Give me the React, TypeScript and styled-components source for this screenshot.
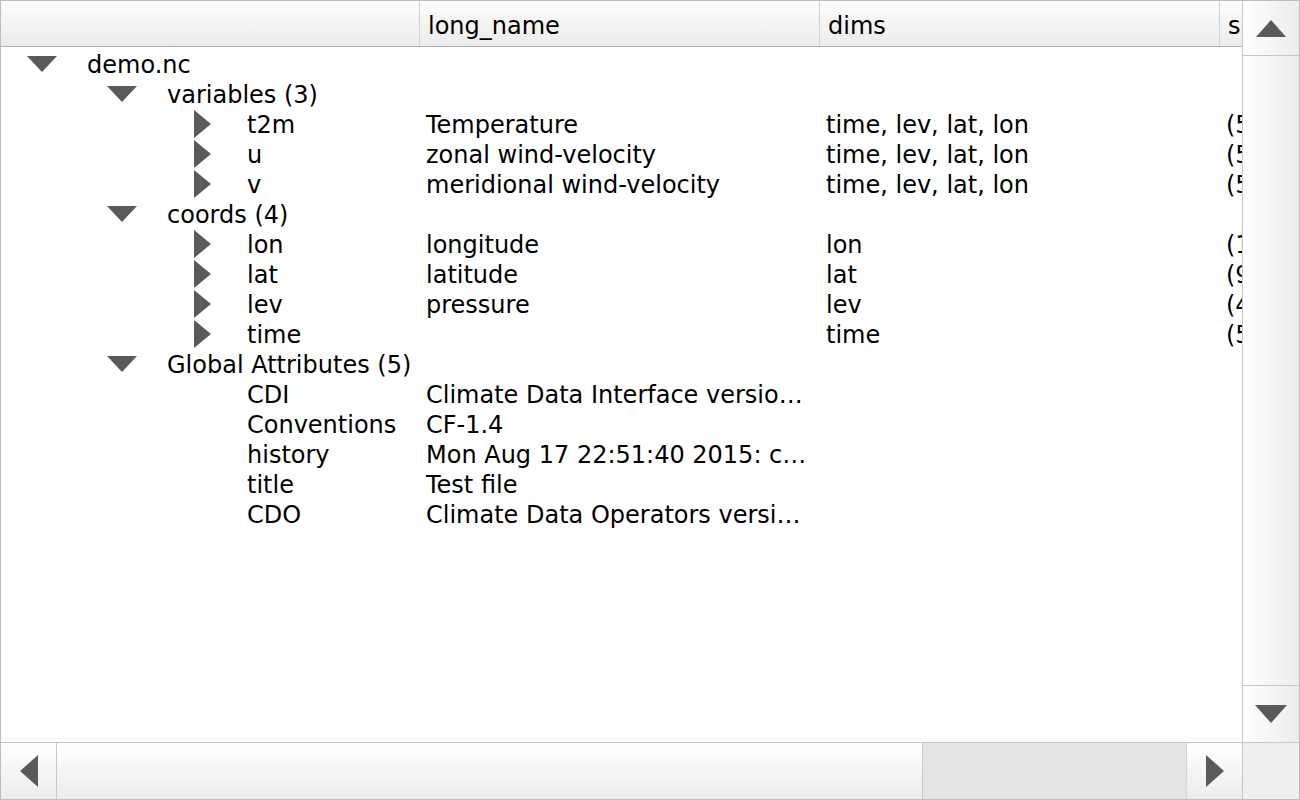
import React from "react";
import styled, { createGlobalStyle } from "styled-components";

const Global = createGlobalStyle`
  html, body { margin: 0; padding: 0; background: #ffffff; }
  body { font-family: "DejaVu Sans", "Liberation Sans", sans-serif; }
  * { box-sizing: border-box; }
`;

const Frame = styled.div`
  width: 1300px;
  height: 800px;
  border: 1px solid #bdbdbd;
  display: grid;
  grid-template-columns: 1fr 57px;
  grid-template-rows: 1fr 57px;
  background: #ffffff;
  overflow: hidden;
`;

const Viewport = styled.div`
  overflow: hidden;
  display: flex;
  flex-direction: column;
  min-width: 0;
`;

const Header = styled.div`
  height: 46px;
  flex: none;
  display: flex;
  border-bottom: 1px solid #b3b3b3;
  background: linear-gradient(to bottom, #fdfdfd, #ebebeb);
`;

const HeaderCell = styled.div<{ $w?: number }>`
  flex: ${(p) => (p.$w ? `0 0 ${p.$w}px` : "1 0 auto")};
  width: ${(p) => (p.$w ? `${p.$w}px` : "auto")};
  border-right: ${(p) => (p.$w ? "1px solid #d2d2d2" : "none")};
  padding-left: 8px;
  padding-top: 5px;
  display: flex;
  align-items: center;
  font-size: 24px;
  line-height: 28px;
  color: #000;
  white-space: nowrap;
  overflow: hidden;
`;

const Body = styled.div`
  padding-top: 3px;
  display: flex;
  flex-direction: column;
`;

const Row = styled.div`
  height: 30px;
  display: flex;
  align-items: center;
  font-size: 24px;
  line-height: 30px;
  color: #000;
  white-space: nowrap;
`;

const TreeCell = styled.div<{ $level: number }>`
  flex: 0 0 419px;
  display: flex;
  align-items: center;
  padding-left: ${(p) => p.$level * 80}px;
  overflow: hidden;
`;

const ToggleBox = styled.div`
  flex: 0 0 82px;
  height: 30px;
  display: flex;
  align-items: center;
  justify-content: center;
  margin-right: 4px;
`;

const Cell = styled.div<{ $w?: number }>`
  flex: ${(p) => (p.$w ? `0 0 ${p.$w}px` : "1 0 auto")};
  padding-left: 6px;
  overflow: hidden;
`;

const VScroll = styled.div`
  border-left: 1px solid #c6c6c6;
  display: flex;
  flex-direction: column;
  background: linear-gradient(to right, #ffffff, #ececec);
`;

const VButton = styled.div<{ $top?: boolean }>`
  height: ${(p) => (p.$top ? 55 : 57)}px;
  flex: none;
  display: flex;
  align-items: center;
  justify-content: center;
  background: linear-gradient(to right, #ffffff, #ececec);
  border-bottom: ${(p) => (p.$top ? "1px solid #c6c6c6" : "none")};
  border-top: ${(p) => (p.$top ? "none" : "1px solid #c6c6c6")};
`;

const VTrack = styled.div`
  flex: 1;
`;

const HScroll = styled.div`
  border-top: 1px solid #c6c6c6;
  display: flex;
  background: linear-gradient(to bottom, #ffffff, #ececec);
`;

const HButton = styled.div<{ $left?: boolean }>`
  flex: 0 0 56px;
  display: flex;
  align-items: center;
  justify-content: center;
  border-right: ${(p) => (p.$left ? "1px solid #c6c6c6" : "none")};
  border-left: ${(p) => (p.$left ? "none" : "1px solid #d6d6d6")};
  background: linear-gradient(to bottom, #ffffff, #ececec);
`;

const HTrack = styled.div`
  flex: 1;
  display: flex;
  justify-content: flex-end;
`;

const HThumb = styled.div`
  width: 264px;
  background: #e4e4e4;
  border-left: 1px solid #c8c8c8;
`;

const Corner = styled.div`
  border-top: 1px solid #c6c6c6;
  border-left: 1px solid #c6c6c6;
  background: #efefef;
`;

const Nudge = styled.div<{ $dy: number }>`
  margin-top: ${(p) => p.$dy}px;
`;

const ARROW = "#5a5a5a";

const Down = ({ w = 30, h = 16 }: { w?: number; h?: number }) => (
  <svg width={w} height={h} viewBox={`0 0 ${w} ${h}`} style={{ display: "block" }}>
    <polygon points={`0,0 ${w},0 ${w / 2},${h}`} fill={ARROW} />
  </svg>
);
const Up = ({ w = 30, h = 17 }: { w?: number; h?: number }) => (
  <svg width={w} height={h} viewBox={`0 0 ${w} ${h}`} style={{ display: "block" }}>
    <polygon points={`0,${h} ${w},${h} ${w / 2},0`} fill={ARROW} />
  </svg>
);
const Right = ({ w = 18, h = 30 }: { w?: number; h?: number }) => (
  <svg width={w} height={h} viewBox={`0 0 ${w} ${h}`} style={{ display: "block" }}>
    <polygon points={`0,0 0,${h} ${w},${h / 2}`} fill={ARROW} />
  </svg>
);
const Left = ({ w = 18, h = 32 }: { w?: number; h?: number }) => (
  <svg width={w} height={h} viewBox={`0 0 ${w} ${h}`} style={{ display: "block" }}>
    <polygon points={`${w},0 ${w},${h} 0,${h / 2}`} fill={ARROW} />
  </svg>
);

type Node = {
  level: number;
  name: string;
  toggle?: "open" | "closed";
  long?: string;
  dims?: string;
  shape?: string;
};

const rows: Node[] = [
  { level: 0, name: "demo.nc", toggle: "open" },
  { level: 1, name: "variables (3)", toggle: "open" },
  { level: 2, name: "t2m", toggle: "closed", long: "Temperature", dims: "time, lev, lat, lon", shape: "(5, 4, 96, 192)" },
  { level: 2, name: "u", toggle: "closed", long: "zonal wind-velocity", dims: "time, lev, lat, lon", shape: "(5, 4, 96, 192)" },
  { level: 2, name: "v", toggle: "closed", long: "meridional wind-velocity", dims: "time, lev, lat, lon", shape: "(5, 4, 96, 192)" },
  { level: 1, name: "coords (4)", toggle: "open" },
  { level: 2, name: "lon", toggle: "closed", long: "longitude", dims: "lon", shape: "(192,)" },
  { level: 2, name: "lat", toggle: "closed", long: "latitude", dims: "lat", shape: "(96,)" },
  { level: 2, name: "lev", toggle: "closed", long: "pressure", dims: "lev", shape: "(4,)" },
  { level: 2, name: "time", toggle: "closed", long: "", dims: "time", shape: "(5,)" },
  { level: 1, name: "Global Attributes (5)", toggle: "open" },
  { level: 2, name: "CDI", long: "Climate Data Interface versio…" },
  { level: 2, name: "Conventions", long: "CF-1.4" },
  { level: 2, name: "history", long: "Mon Aug 17 22:51:40 2015: c…" },
  { level: 2, name: "title", long: "Test file" },
  { level: 2, name: "CDO", long: "Climate Data Operators versi…" },
];

export default function App() {
  return (
    <>
      <Global />
      <Frame>
        <Viewport>
          <Header>
            <HeaderCell $w={419} />
            <HeaderCell $w={400}>long_name</HeaderCell>
            <HeaderCell $w={400}>dims</HeaderCell>
            <HeaderCell>shape</HeaderCell>
          </Header>
          <Body>
            {rows.map((r, i) => (
              <Row key={i}>
                <TreeCell $level={r.level}>
                  <ToggleBox>
                    {r.toggle === "open" && (
                      <Nudge $dy={-3}>
                        <Down />
                      </Nudge>
                    )}
                    {r.toggle === "closed" && (
                      <Nudge $dy={-2}>
                        <Right w={17} h={28} />
                      </Nudge>
                    )}
                  </ToggleBox>
                  <span>{r.name}</span>
                </TreeCell>
                <Cell $w={400}>{r.long}</Cell>
                <Cell $w={400}>{r.dims}</Cell>
                <Cell>{r.shape}</Cell>
              </Row>
            ))}
          </Body>
        </Viewport>
        <VScroll>
          <VButton $top>
            <Up />
          </VButton>
          <VTrack />
          <VButton>
            <Down w={32} h={18} />
          </VButton>
        </VScroll>
        <HScroll>
          <HButton $left>
            <Left />
          </HButton>
          <HTrack>
            <HThumb />
          </HTrack>
          <HButton>
            <Right w={18} h={32} />
          </HButton>
        </HScroll>
        <Corner />
      </Frame>
    </>
  );
}
